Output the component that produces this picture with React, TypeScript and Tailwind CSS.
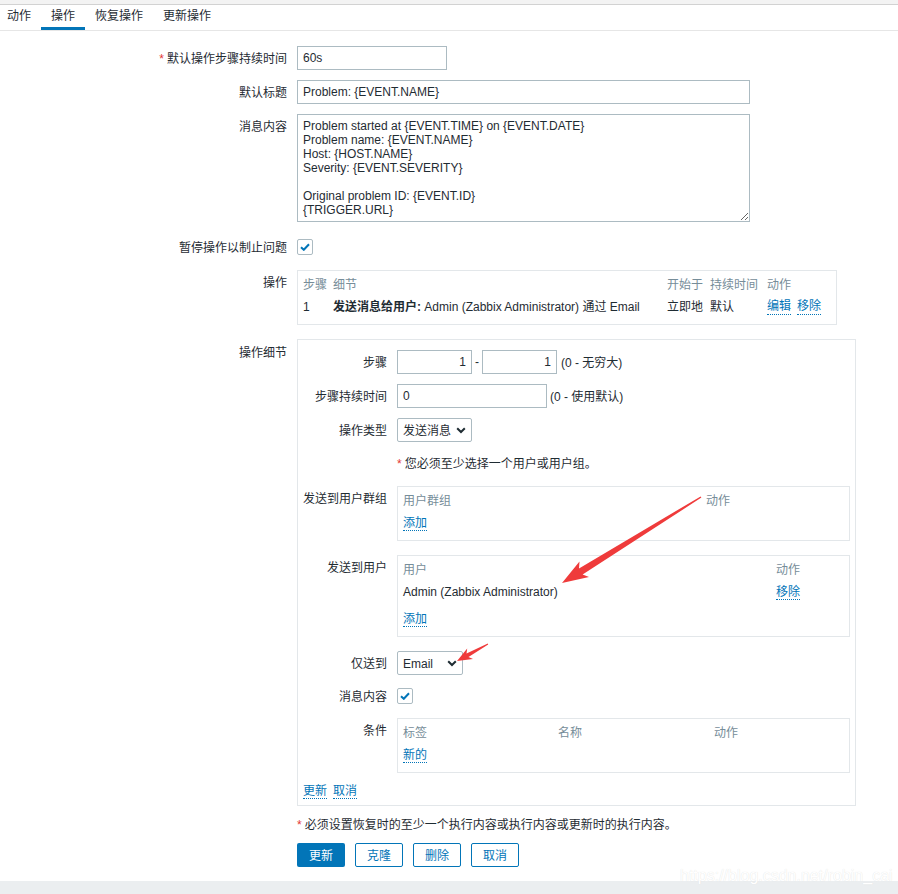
import React from "react";

const inputCls =
  "h-[24px] border border-[#acbbc2] bg-white px-[5px] text-[12px] text-[#1f2c33] outline-none";

function Link({ children }: { children: React.ReactNode }) {
  return (
    <span className="text-[#0275b8] border-b border-dotted border-[#0275b8] leading-[14px]">
      {children}
    </span>
  );
}

function Check() {
  return (
    <div className="w-[16px] h-[16px] border border-[#acbbc2] rounded-[2px] bg-white flex items-center justify-center">
      <svg width="10" height="8" viewBox="0 0 10 8">
        <path d="M1 4.2 L3.8 6.8 L9 1.2" fill="none" stroke="#0275b8" strokeWidth="2" />
      </svg>
    </div>
  );
}

function Chevron() {
  return (
    <svg width="10" height="7" viewBox="0 0 10 7">
      <path d="M1.2 1.2 L5 5 L8.8 1.2" fill="none" stroke="#1f2c33" strokeWidth="2" />
    </svg>
  );
}

function Select({ w, text }: { w: string; text: string }) {
  return (
    <div
      className={`${w} h-[24px] border border-[#acbbc2] rounded-[2px] bg-white flex items-center justify-between pl-[5px] pr-[5px] text-[12px] text-[#1f2c33]`}
    >
      <span className="pt-[1px]">{text}</span>
      <Chevron />
    </div>
  );
}

export default function App() {
  return (
    <div className="relative w-[898px] h-[894px] bg-white flex flex-col text-[12px] text-[#1f2c33] font-['Liberation_Sans','Noto_Sans_CJK_SC',sans-serif] overflow-hidden">
      {/* top strip */}
      <div className="h-[5px] bg-[#f3f3f3] border-b border-[#d2d2d2]" />
      {/* tabs */}
      <div className="h-[26px] border-b border-[#e6e6e6] flex ml-[-3px]">
        <div className="px-[10px] pt-[4px] leading-[14px] text-[#1f2c33]">动作</div>
        <div className="px-[10px] pt-[4px] leading-[14px] border-b-[3px] border-[#0275b8]">操作</div>
        <div className="px-[10px] pt-[4px] leading-[14px]">恢复操作</div>
        <div className="px-[10px] pt-[4px] leading-[14px]">更新操作</div>
      </div>

      <div className="flex flex-col pt-[15px]">
        {/* row 1 */}
        <div className="flex items-center h-[24px]">
          <div className="w-[297px] pr-[10px] text-right pt-[2px]">
            <span className="text-[#e33734] mr-[3px]">*</span>默认操作步骤持续时间
          </div>
          <input readOnly value="60s" className={`${inputCls} w-[150px]`} />
        </div>
        {/* row 2 */}
        <div className="flex items-center h-[24px] mt-[10px]">
          <div className="w-[297px] pr-[10px] text-right pt-[2px]">默认标题</div>
          <input readOnly value="Problem: {EVENT.NAME}" className={`${inputCls} w-[453px]`} />
        </div>
        {/* row 3 */}
        <div className="flex mt-[10px]">
          <div className="w-[297px] pr-[10px] text-right pt-[6px] leading-[14px]">消息内容</div>
          <textarea
            readOnly
            className="w-[453px] h-[108px] border border-[#acbbc2] px-[5px] py-[4px] leading-[14px] text-[12px] text-[#1f2c33] outline-none"
            defaultValue={
              "Problem started at {EVENT.TIME} on {EVENT.DATE}\nProblem name: {EVENT.NAME}\nHost: {HOST.NAME}\nSeverity: {EVENT.SEVERITY}\n\nOriginal problem ID: {EVENT.ID}\n{TRIGGER.URL}"
            }
          />
        </div>
        {/* row 4 */}
        <div className="flex items-center h-[24px] mt-[12px]">
          <div className="w-[297px] pr-[10px] text-right pt-[3px]">暂停操作以制止问题</div>
          <div className="pt-[1px]">
            <Check />
          </div>
        </div>
        {/* row 5 operations */}
        <div className="flex mt-[12px]">
          <div className="w-[297px] pr-[10px] text-right pt-[6px] leading-[14px]">操作</div>
          <div className="w-[540px] h-[55px] border border-[#e3e7ea] px-[5px] pt-[6px]">
            <div className="grid grid-cols-[30px_334px_43px_57px_auto] leading-[16px] text-[#768d99]">
              <div>步骤</div>
              <div>细节</div>
              <div>开始于</div>
              <div>持续时间</div>
              <div>动作</div>
            </div>
            <div className="grid grid-cols-[30px_334px_43px_57px_auto] leading-[16px] mt-[6px]">
              <div>1</div>
              <div>
                <b className="font-bold">发送消息给用户:</b> Admin (Zabbix Administrator) 通过 Email
              </div>
              <div>立即地</div>
              <div>默认</div>
              <div className="flex gap-[6px]">
                <Link>编辑</Link>
                <Link>移除</Link>
              </div>
            </div>
          </div>
        </div>
        {/* row 6 operation details */}
        <div className="flex mt-[14px]">
          <div className="w-[297px] pr-[10px] text-right pt-[7px] leading-[14px]">操作细节</div>
          <div className="w-[559px] h-[467px] border border-[#e3e7ea] pt-[10px] flex flex-col">
            {/* step */}
            <div className="flex items-center h-[24px]">
              <div className="w-[99px] pr-[10px] text-right pt-[2px]">步骤</div>
              <input readOnly value="1" className={`${inputCls} w-[75px] text-right`} />
              <span className="mx-[3px]">-</span>
              <input readOnly value="1" className={`${inputCls} w-[75px] text-right`} />
              <span className="ml-[4px] pt-[1px]">(0 - 无穷大)</span>
            </div>
            <div className="flex items-center h-[24px] mt-[10px]">
              <div className="w-[99px] pr-[10px] text-right pt-[2px]">步骤持续时间</div>
              <input readOnly value="0" className={`${inputCls} w-[150px]`} />
              <span className="ml-[3px] pt-[1px]">(0 - 使用默认)</span>
            </div>
            <div className="flex items-center h-[24px] mt-[10px]">
              <div className="w-[99px] pr-[10px] text-right pt-[2px]">操作类型</div>
              <Select w="w-[75px]" text="发送消息" />
            </div>
            <div className="flex mt-[15px] leading-[14px]">
              <div className="w-[99px]" />
              <div>
                <span className="text-[#e33734] mr-[3px]">*</span>您必须至少选择一个用户或用户组。
              </div>
            </div>
            {/* user groups */}
            <div className="flex mt-[15px]">
              <div className="w-[99px] pr-[10px] text-right pt-[6px] leading-[14px]">发送到用户群组</div>
              <div className="w-[453px] h-[55px] border border-[#e3e7ea] px-[5px] pt-[6px]">
                <div className="grid grid-cols-[303px_auto] leading-[16px] text-[#768d99]">
                  <div>用户群组</div>
                  <div>动作</div>
                </div>
                <div className="leading-[16px] mt-[6px]">
                  <Link>添加</Link>
                </div>
              </div>
            </div>
            {/* users */}
            <div className="flex mt-[14px]">
              <div className="w-[99px] pr-[10px] text-right pt-[6px] leading-[14px]">发送到用户</div>
              <div className="w-[453px] h-[82px] border border-[#e3e7ea] px-[5px] pt-[6px]">
                <div className="grid grid-cols-[373px_auto] leading-[16px] text-[#768d99]">
                  <div>用户</div>
                  <div>动作</div>
                </div>
                <div className="grid grid-cols-[373px_auto] leading-[16px] mt-[6px]">
                  <div>Admin (Zabbix Administrator)</div>
                  <div>
                    <Link>移除</Link>
                  </div>
                </div>
                <div className="leading-[16px] mt-[11px]">
                  <Link>添加</Link>
                </div>
              </div>
            </div>
            {/* send only to */}
            <div className="flex items-center h-[24px] mt-[14px]">
              <div className="w-[99px] pr-[10px] text-right pt-[2px]">仅送到</div>
              <Select w="w-[66px]" text="Email" />
            </div>
            <div className="flex items-center h-[24px] mt-[9px]">
              <div className="w-[99px] pr-[10px] text-right pt-[2px]">消息内容</div>
              <Check />
            </div>
            {/* conditions */}
            <div className="flex mt-[10px]">
              <div className="w-[99px] pr-[10px] text-right pt-[6px] leading-[14px]">条件</div>
              <div className="w-[453px] h-[55px] border border-[#e3e7ea] px-[5px] pt-[6px]">
                <div className="grid grid-cols-[155px_156px_auto] leading-[16px] text-[#768d99]">
                  <div>标签</div>
                  <div>名称</div>
                  <div>动作</div>
                </div>
                <div className="leading-[16px] mt-[6px]">
                  <Link>新的</Link>
                </div>
              </div>
            </div>
            <div className="flex gap-[6px] mt-[11px] pl-[5px] leading-[14px]">
              <Link>更新</Link>
              <Link>取消</Link>
            </div>
          </div>
        </div>
        {/* note */}
        <div className="flex mt-[12px] leading-[14px]">
          <div className="w-[297px]" />
          <div>
            <span className="text-[#e33734] mr-[3px]">*</span>必须设置恢复时的至少一个执行内容或执行内容或更新时的执行内容。
          </div>
        </div>
        {/* buttons */}
        <div className="flex mt-[11px]">
          <div className="w-[297px]" />
          <div className="flex gap-[10px]">
            <div className="w-[48px] h-[24px] pt-[1px] bg-[#0275b8] text-white rounded-[2px] flex items-center justify-center">
              更新
            </div>
            <div className="w-[48px] h-[24px] pt-[1px] border border-[#0275b8] text-[#0275b8] rounded-[2px] flex items-center justify-center">
              克隆
            </div>
            <div className="w-[48px] h-[24px] pt-[1px] border border-[#0275b8] text-[#0275b8] rounded-[2px] flex items-center justify-center">
              删除
            </div>
            <div className="w-[48px] h-[24px] pt-[1px] border border-[#0275b8] text-[#0275b8] rounded-[2px] flex items-center justify-center">
              取消
            </div>
          </div>
        </div>
      </div>
      <div className="flex-1" />
      <div className="h-[13px] bg-[#ebeef0]" />

      {/* watermark */}
      <div className="absolute left-[680px] top-[866px] text-[16px] leading-[20px] text-white [text-shadow:0_0_1px_#dcdcdc] pointer-events-none">
        https://blog.csdn.net/robin_cai
      </div>

      {/* red arrows */}
      <svg className="absolute left-0 top-0 pointer-events-none" width="898" height="894" viewBox="0 0 898 894">
        <polygon
          points="562,583 589,577 582.6,574.4 701.4,497.6 700.6,496.4 579,568.4 579.5,561.6"
          fill="#ef3b3b"
        />
        <polygon
          points="457,661 473,659.1 468.5,656.9 488.2,644.4 487.8,643.6 466.5,653.4 467.2,648.5"
          fill="#ef3b3b"
        />
      </svg>
    </div>
  );
}
